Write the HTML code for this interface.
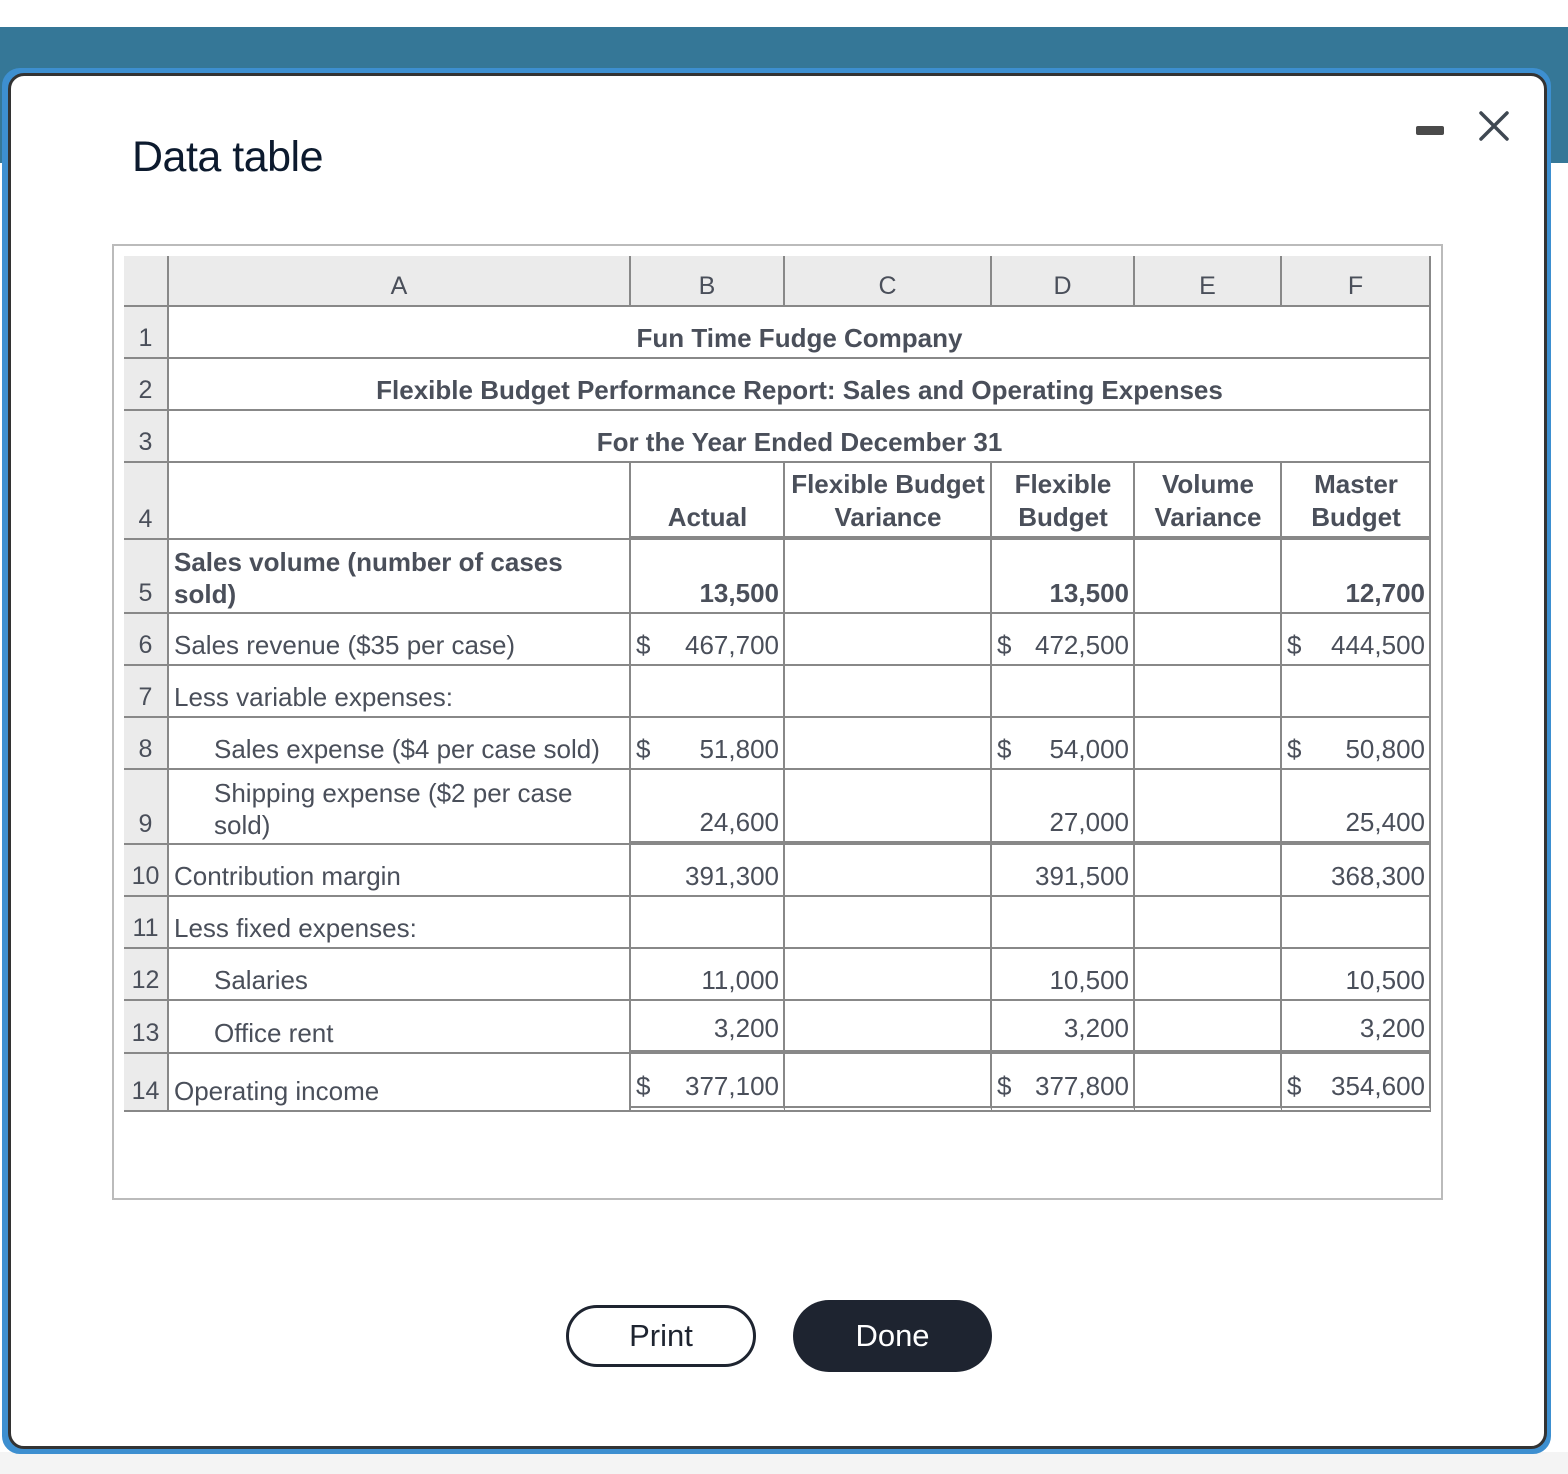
<!DOCTYPE html>
<html><head><meta charset="utf-8">
<style>
*{box-sizing:border-box;margin:0;padding:0}
body{width:1568px;height:1474px;position:relative;background:#fff;font-family:"Liberation Sans",Arial,sans-serif;overflow:hidden}
.bar{position:absolute;left:0;top:27px;width:1568px;height:136px;background:#357797}
.bottom{position:absolute;left:0;top:1452px;width:1568px;height:22px;background:#f4f4f4}
.dlg-o{position:absolute;left:2px;top:68px;width:1549px;height:1386px;border:4px solid #3d8fd0;border-radius:18px;background:#3d8fd0}
.dlg{position:absolute;left:8px;top:73px;width:1539px;height:1376px;border:3px solid #333;border-radius:16px;background:#fff}
h1{position:absolute;left:132px;top:133px;font-size:43px;font-weight:normal;color:#0c1a2e;letter-spacing:-0.5px}
.min{position:absolute;left:1416px;top:126px;width:28px;height:9px;background:#4a4a4a;border-radius:2px}
.frame{position:absolute;left:112px;top:244px;width:1331px;height:956px;border:2px solid #bbb}
table{position:absolute;left:124px;top:256px;border-collapse:separate;border-spacing:0;table-layout:fixed;color:#4a4f5a;font-size:26px}
td{border-right:2px solid #888;border-bottom:2px solid #888;vertical-align:bottom;padding:0 4px 2px 5px;line-height:33px;white-space:nowrap;overflow:hidden}
td.n{background:#ebebeb;text-align:center;padding:0 0 2px 0;font-size:25px}
tr.h td{background:#ebebeb;text-align:center;vertical-align:middle;padding:12px 0 0 0;font-size:25px}
.c{text-align:center;font-weight:bold}
.b{font-weight:bold}
.r{text-align:right}
.hd{text-align:center;font-weight:bold;line-height:33px}
.ind{padding-left:45px}
.d{display:flex;justify-content:space-between}
.thick td.v{border-bottom:4px solid #888}
.dbl td.v{border-bottom:6px double #888}
.btn{position:absolute;font-size:31px;display:flex;align-items:center;justify-content:center}
.print{left:566px;top:1305px;width:190px;height:62px;border:3px solid #1e2430;border-radius:31px;color:#1e2430}
.done{left:793px;top:1300px;width:199px;height:72px;background:#1e2430;border-radius:36px;color:#fff}
</style></head><body>
<div class="bar"></div>
<div class="bottom"></div>
<div class="dlg-o"></div>
<div class="dlg"></div>
<h1>Data table</h1>
<div class="min"></div>
<svg style="position:absolute;left:1478px;top:110px" width="32" height="32" viewBox="0 0 32 32"><path d="M3 3L29 29M29 3L3 29" stroke="#3f4852" stroke-width="3.5" stroke-linecap="round"/></svg>
<div class="frame"></div>
<table>
<colgroup><col style="width:45px"><col style="width:462px"><col style="width:154px"><col style="width:207px"><col style="width:143px"><col style="width:147px"><col style="width:149px"></colgroup>
<tr class="h" style="height:51px"><td></td><td>A</td><td>B</td><td>C</td><td>D</td><td>E</td><td>F</td></tr>
<tr style="height:52px"><td class="n">1</td><td colspan="6" class="c">Fun Time Fudge Company</td></tr>
<tr style="height:52px"><td class="n">2</td><td colspan="6" class="c">Flexible Budget Performance Report: Sales and Operating Expenses</td></tr>
<tr style="height:52px"><td class="n">3</td><td colspan="6" class="c">For the Year Ended December 31</td></tr>
<tr class="thick" style="height:77px"><td class="n">4</td><td></td><td class="hd v">Actual</td><td class="hd v">Flexible Budget<br>Variance</td><td class="hd v">Flexible<br>Budget</td><td class="hd v">Volume<br>Variance</td><td class="hd v">Master<br>Budget</td></tr>
<tr style="height:74px"><td class="n">5</td><td class="b" style="line-height:32px">Sales volume (number of cases<br>sold)</td><td class="r b">13,500</td><td></td><td class="r b">13,500</td><td></td><td class="r b">12,700</td></tr>
<tr style="height:52px"><td class="n">6</td><td>Sales revenue ($35 per case)</td><td><div class="d"><span>$</span><span>467,700</span></div></td><td></td><td><div class="d"><span>$</span><span>472,500</span></div></td><td></td><td><div class="d"><span>$</span><span>444,500</span></div></td></tr>
<tr style="height:52px"><td class="n">7</td><td>Less variable expenses:</td><td></td><td></td><td></td><td></td><td></td></tr>
<tr style="height:52px"><td class="n">8</td><td class="ind">Sales expense ($4 per case sold)</td><td><div class="d"><span>$</span><span>51,800</span></div></td><td></td><td><div class="d"><span>$</span><span>54,000</span></div></td><td></td><td><div class="d"><span>$</span><span>50,800</span></div></td></tr>
<tr class="thick" style="height:75px"><td class="n">9</td><td class="ind" style="line-height:32px">Shipping expense ($2 per case<br>sold)</td><td class="r v">24,600</td><td class="v"></td><td class="r v">27,000</td><td class="v"></td><td class="r v">25,400</td></tr>
<tr style="height:52px"><td class="n">10</td><td>Contribution margin</td><td class="r">391,300</td><td></td><td class="r">391,500</td><td></td><td class="r">368,300</td></tr>
<tr style="height:52px"><td class="n">11</td><td>Less fixed expenses:</td><td></td><td></td><td></td><td></td><td></td></tr>
<tr style="height:52px"><td class="n">12</td><td class="ind">Salaries</td><td class="r">11,000</td><td></td><td class="r">10,500</td><td></td><td class="r">10,500</td></tr>
<tr class="thick" style="height:53px"><td class="n">13</td><td class="ind">Office rent</td><td class="r v" style="padding-bottom:5px">3,200</td><td class="v"></td><td class="r v" style="padding-bottom:5px">3,200</td><td class="v"></td><td class="r v" style="padding-bottom:5px">3,200</td></tr>
<tr class="dbl" style="height:58px"><td class="n">14</td><td>Operating income</td><td class="v" style="padding-bottom:3px"><div class="d"><span>$</span><span>377,100</span></div></td><td class="v"></td><td class="v" style="padding-bottom:3px"><div class="d"><span>$</span><span>377,800</span></div></td><td class="v"></td><td class="v" style="padding-bottom:3px"><div class="d"><span>$</span><span>354,600</span></div></td></tr>
</table>
<div class="btn print">Print</div>
<div class="btn done">Done</div>
</body></html>
